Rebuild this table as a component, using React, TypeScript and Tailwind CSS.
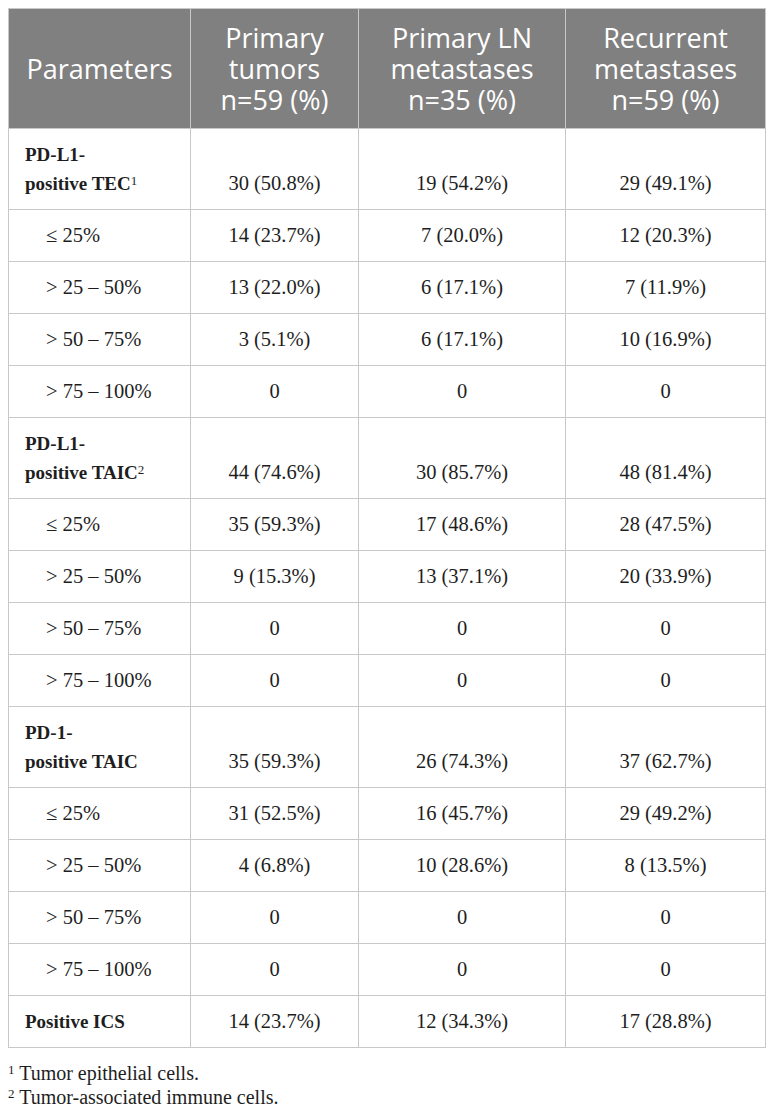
import React from "react";

type Row = { label: string; sup?: string; bold?: boolean; values: string[] };

const rows: Row[] = [
  { label: "PD-L1-\npositive TEC", sup: "1", bold: true, values: ["30 (50.8%)", "19 (54.2%)", "29 (49.1%)"] },
  { label: "≤ 25%", values: ["14 (23.7%)", "7 (20.0%)", "12 (20.3%)"] },
  { label: "> 25 – 50%", values: ["13 (22.0%)", "6 (17.1%)", "7 (11.9%)"] },
  { label: "> 50 – 75%", values: ["3 (5.1%)", "6 (17.1%)", "10 (16.9%)"] },
  { label: "> 75 – 100%", values: ["0", "0", "0"] },
  { label: "PD-L1-\npositive TAIC", sup: "2", bold: true, values: ["44 (74.6%)", "30 (85.7%)", "48 (81.4%)"] },
  { label: "≤ 25%", values: ["35 (59.3%)", "17 (48.6%)", "28 (47.5%)"] },
  { label: "> 25 – 50%", values: ["9 (15.3%)", "13 (37.1%)", "20 (33.9%)"] },
  { label: "> 50 – 75%", values: ["0", "0", "0"] },
  { label: "> 75 – 100%", values: ["0", "0", "0"] },
  { label: "PD-1-\npositive TAIC", bold: true, values: ["35 (59.3%)", "26 (74.3%)", "37 (62.7%)"] },
  { label: "≤ 25%", values: ["31 (52.5%)", "16 (45.7%)", "29 (49.2%)"] },
  { label: "> 25 – 50%", values: ["4 (6.8%)", "10 (28.6%)", "8 (13.5%)"] },
  { label: "> 50 – 75%", values: ["0", "0", "0"] },
  { label: "> 75 – 100%", values: ["0", "0", "0"] },
  { label: "Positive ICS", bold: true, values: ["14 (23.7%)", "12 (34.3%)", "17 (28.8%)"] },
];

const headers = ["Parameters", "Primary\ntumors\nn=59 (%)", "Primary LN\nmetastases\nn=35 (%)", "Recurrent\nmetastases\nn=59 (%)"];

export default function App() {
  return (
    <div className="min-h-[1112px] bg-white p-2 text-[#1e1e1e]">
      <table className="w-[757px] table-fixed border-collapse">
        <colgroup>
          <col className="w-[182px]" />
          <col className="w-[168px]" />
          <col className="w-[207px]" />
          <col className="w-[200px]" />
        </colgroup>
        <thead>
          <tr>
            {headers.map((h, i) => (
              <th
                key={i}
                className="whitespace-pre-line border border-[#c8c8c8] bg-[#808080] px-1 py-[13px] text-center align-middle text-[27px] font-normal leading-[31px] text-white"
                style={{ fontFamily: '"Open Sans", sans-serif' }}
              >
                {h}
              </th>
            ))}
          </tr>
        </thead>
        <tbody style={{ fontFamily: '"Liberation Serif", serif' }} className="text-[20.5px] leading-[29px]">
          {rows.map((r, i) => (
            <tr key={i}>
              <td
                className={
                  r.bold
                    ? "whitespace-pre-line border border-[#c8c8c8] py-[11px] pl-4 pr-1 align-bottom text-[19px] font-bold"
                    : "border border-[#c8c8c8] py-[11px] pl-[37px] pr-1 align-bottom"
                }
              >
                {r.label}
                {r.sup && <sup className="relative -top-[5px] text-[13px] font-normal">{r.sup}</sup>}
              </td>
              {r.values.map((v, j) => (
                <td key={j} className="border border-[#c8c8c8] py-[11px] text-center align-bottom">
                  {v}
                </td>
              ))}
            </tr>
          ))}
        </tbody>
      </table>
      <div className="mt-[13px] text-[20px] leading-[24px]" style={{ fontFamily: '"Liberation Serif", serif' }}>
        <p>
          <sup className="text-[13px]">1</sup> Tumor epithelial cells.
        </p>
        <p>
          <sup className="text-[13px]">2</sup> Tumor-associated immune cells.
        </p>
      </div>
    </div>
  );
}
